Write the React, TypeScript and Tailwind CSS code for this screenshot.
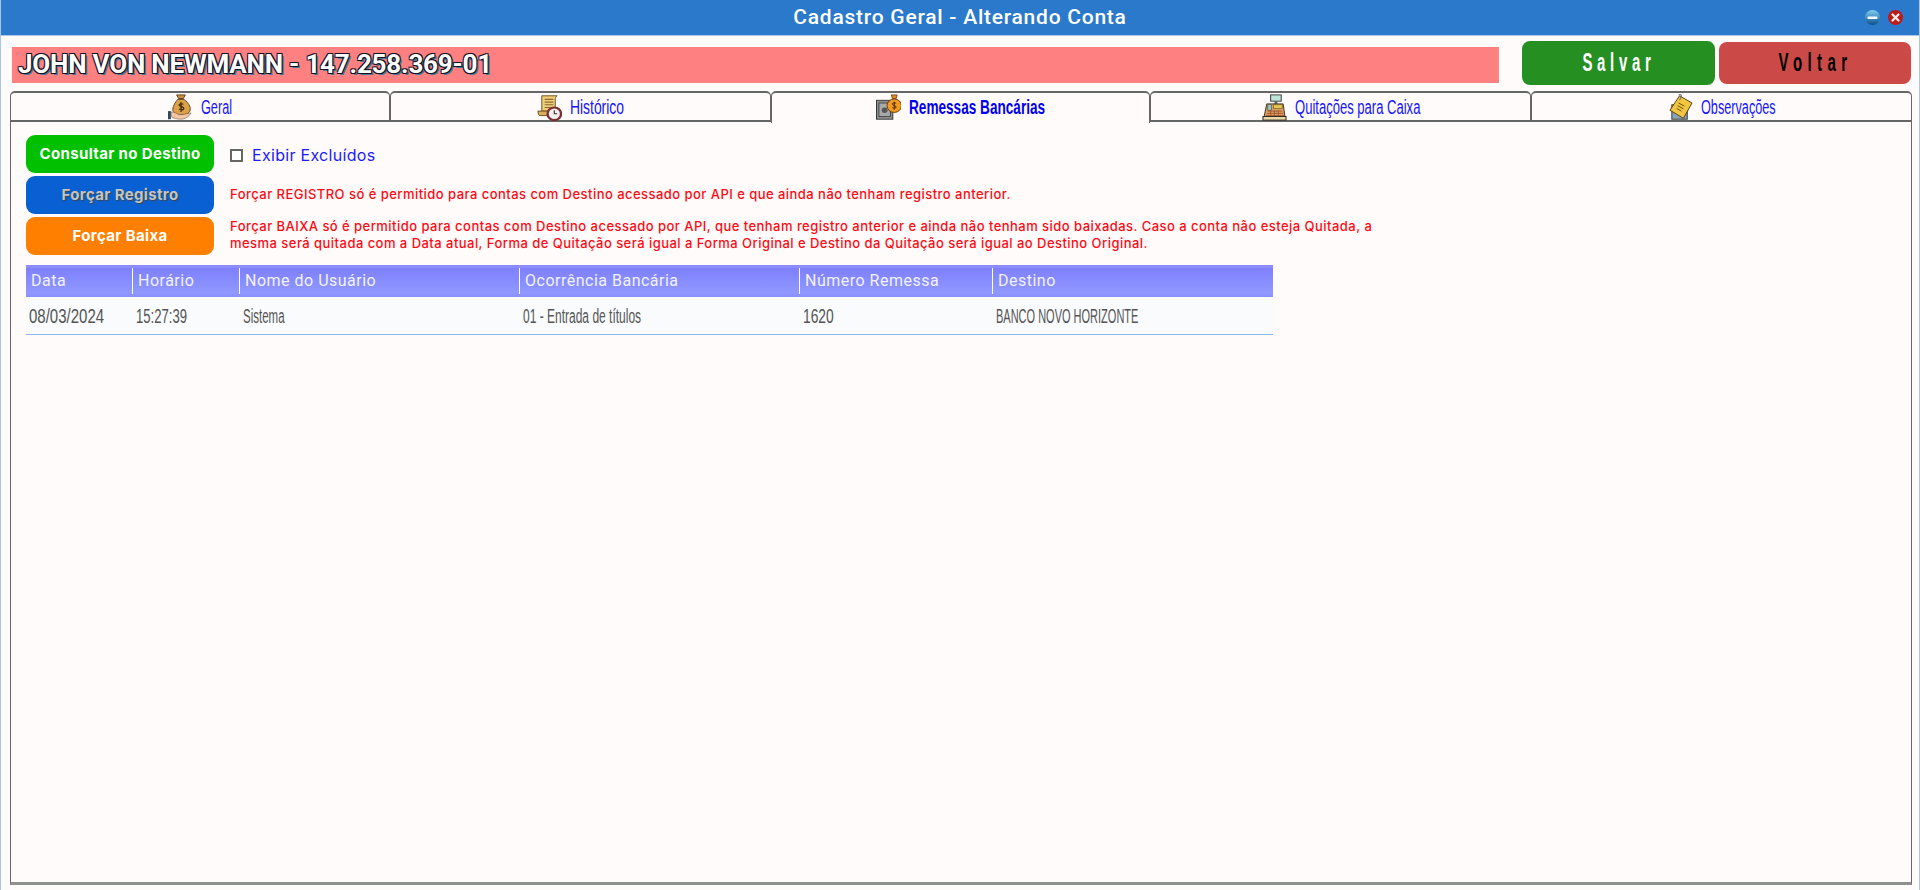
import type { ReactNode } from "react";

const CONDENSED = "font-['Liberation_Sans',sans-serif]";
const TECH = "font-['Roboto',sans-serif]";
const WIDE = "font-['Inter',sans-serif]";

function BagHandIcon() {
  return (
    <svg width="25" height="27" viewBox="0 0 26 30" preserveAspectRatio="none">
      <path d="M9 1h9l-2 4h-5z" fill="#c98f3c" stroke="#5a3d1c" strokeWidth="1" />
      <path d="M10 6h7c4 4 7 8 6 12-1 4-4 5-9 5-6 0-9-2-9-6 0-4 3-8 5-11z" fill="#dca24a" stroke="#5a3d1c" strokeWidth="1" />
      <path d="M13.500 9v11M16 11.500c-1-1-4-1-4.500.5-.5 2 5 1.500 5 4 0 2-3.500 2-5 .5" fill="none" stroke="#3a2812" strokeWidth="1.300" />
      <path d="M3 20c4 0 6 2 9 3 4 0 7-1 12-2-2 4-6 7-11 7-3 0-6-1-9-2z" fill="#f3c6a5" stroke="#7a5a4a" strokeWidth=".6" />
      <rect x="0" y="19" width="3" height="9" fill="#2f4a5e" />
    </svg>
  );
}

function ScrollClockIcon() {
  return (
    <svg width="25" height="27" viewBox="0 0 26 30" preserveAspectRatio="none">
      <path d="M5 2h16c-1 1-2 2-2 3v14H5z" fill="#f0cf7a" stroke="#6b4a1c" strokeWidth="1" />
      <path d="M1 19h15v3c0 1 1 2 1 2H3c-1 0-2-2-2-5z" fill="#d9ae5a" stroke="#6b4a1c" strokeWidth="1" />
      <path d="M8 6h9M8 9h9M8 12h9M8 15h6" stroke="#8a6a2c" strokeWidth="1.200" />
      <circle cx="18" cy="22" r="7" fill="#f4f0ee" stroke="#7c2f33" strokeWidth="2.400" />
      <path d="M18 18v4h3" fill="none" stroke="#333" strokeWidth="1.200" />
    </svg>
  );
}

function SafeBagIcon() {
  return (
    <svg width="25" height="27" viewBox="0 0 26 30" preserveAspectRatio="none">
      <rect x="0.500" y="7" width="17" height="21" fill="#8f8f8f" stroke="#333" strokeWidth="1" />
      <rect x="3" y="10" width="12" height="15" fill="#a8a8a8" stroke="#444" strokeWidth="1" />
      <circle cx="9" cy="18" r="3" fill="#555" />
      <path d="M16 1h6l-1 4h-4z" fill="#e58a1f" stroke="#5a3208" strokeWidth=".8" />
      <circle cx="19" cy="13" r="7.500" fill="#f39a1e" stroke="#6a3a08" strokeWidth="1" />
      <path d="M21 10.500c-1-1-4-1-4 .5 0 2 4 1.500 4 3.500 0 1.500-3 1.500-4 .5M19 8.500v9" fill="none" stroke="#4a2604" strokeWidth="1" />
    </svg>
  );
}

function RegisterIcon() {
  return (
    <svg width="25" height="27" viewBox="0 0 26 30" preserveAspectRatio="none">
      <rect x="9" y="1" width="11" height="7" fill="#bfe3d6" stroke="#333" strokeWidth="1" />
      <rect x="13" y="8" width="3" height="3" fill="#666" />
      <path d="M5 11h17l2 15H2z" fill="#d9a066" stroke="#3a2a18" strokeWidth="1" />
      <rect x="12" y="12" width="9" height="4" fill="#e7c84f" stroke="#5a4a18" strokeWidth=".6" />
      <rect x="6" y="12" width="4" height="6" fill="#9fc7b8" stroke="#444" strokeWidth=".6" />
      <path d="M6 19h15M5 21.500h17M4 24h19M9 18v7M13 18v7M17 18v7" stroke="#a4552c" strokeWidth="1" />
      <rect x="1" y="25" width="24" height="4" fill="#ead9a6" stroke="#222" strokeWidth="1" />
    </svg>
  );
}

function NoteIcon() {
  return (
    <svg width="25" height="27" viewBox="0 0 26 30" preserveAspectRatio="none">
      <rect x="4" y="12" width="16" height="16" fill="#8aa5b5" stroke="#333" strokeWidth="1" />
      <path d="M12 2l13 8-9 17-14-9z" fill="#f4c63f" stroke="#4a3a10" strokeWidth="1" />
      <path d="M11 10l6 3.500M10 13l6 3.500M9 16l5 3" stroke="#5a4a18" strokeWidth="1" />
      <path d="M11 1c2-1 3 0 3 2l-2 4" fill="none" stroke="#777" strokeWidth="1.200" />
    </svg>
  );
}

function MinimizeIcon() {
  return (
    <svg width="15" height="15" viewBox="0 0 15 15">
      <defs>
        <linearGradient id="minGrad" x1="0" y1="0" x2="0" y2="1">
          <stop offset="0" stopColor="#7fd0f0" />
          <stop offset="1" stopColor="#0a4f8c" />
        </linearGradient>
      </defs>
      <circle cx="7.500" cy="7.500" r="7.500" fill="url(#minGrad)" />
      <rect x="2.500" y="6.500" width="10" height="2.500" rx="1" fill="#f4fbff" />
    </svg>
  );
}

function CloseIcon() {
  return (
    <svg width="15" height="15" viewBox="0 0 15 15">
      <circle cx="7.500" cy="7.500" r="7.500" fill="#bd1a1a" />
      <path d="M4.500 4.500l6 6M10.500 4.500l-6 6" stroke="#fbeee6" strokeWidth="2.300" strokeLinecap="round" />
    </svg>
  );
}

type TabProps = {
  icon: ReactNode;
  label: string;
  tabWidth: string;
  labelWidth: string;
  labelScale: string;
  active?: boolean;
};

function Tab({ icon, label, tabWidth, labelWidth, labelScale, active }: TabProps) {
  return (
    <div
      className={`${tabWidth} ${active ? "h-[32px] border-b-0" : "h-[31px] border-b-2"} flex items-start justify-center gap-[8px] rounded-t-[5px] border-x border-t-2 border-[#666666] bg-[#fffbfa]`}
    >
      <span className="flex h-[28px] w-[25px] items-center">{icon}</span>
      <span className={`${labelWidth} ${CONDENSED} h-[28px] whitespace-nowrap text-[20px] leading-[29px]`}>
        <span className={`${labelScale} inline-block origin-left ${active ? "font-bold text-[#0000ee]" : "text-[#1414ff]"}`}>{label}</span>
      </span>
    </div>
  );
}

function ActionButton({ label, color, muted }: { label: string; color: string; muted?: boolean }) {
  return (
    <button
      className={`${WIDE} h-[38px] w-[188px] rounded-[9px] text-[15px] font-bold tracking-[0.35px] ${color} ${
        muted ? "text-[#c4c4c4] [text-shadow:1px_1px_1px_#444]" : "text-white"
      }`}
    >
      {label}
    </button>
  );
}

const columns = [
  { title: "Data", value: "08/03/2024", width: "w-[107px]", scale: "scale-x-[0.75]" },
  { title: "Horário", value: "15:27:39", width: "w-[107px]", scale: "scale-x-[0.655]" },
  { title: "Nome do Usuário", value: "Sistema", width: "w-[280px]", scale: "scale-x-[0.575]" },
  { title: "Ocorrência Bancária", value: "01 - Entrada de títulos", width: "w-[280px]", scale: "scale-x-[0.6]" },
  { title: "Número Remessa", value: "1620", width: "w-[193px]", scale: "scale-x-[0.69]" },
  { title: "Destino", value: "BANCO NOVO HORIZONTE", width: "w-[280px]", scale: "scale-x-[0.55]" },
];

export default function App() {
  return (
    <div className="flex h-[890px] w-[1920px] flex-col overflow-hidden border-x border-[#a9c5ea] bg-[#fffbfa]">
      <div className={`${TECH} relative -mx-px h-[36px] border-b border-[#a9c5ea] bg-[#2a79cb] text-center text-[21px] font-medium leading-[34px] tracking-[0.75px] text-white`}>
        Cadastro Geral - Alterando Conta
        <div className="absolute right-[17px] top-[10px] flex gap-[8px]">
          <MinimizeIcon />
          <CloseIcon />
        </div>
      </div>

      <div className="flex h-[49px] items-start pl-[11px] pt-[5px]">
        <div
          className={`${TECH} mt-[6px] h-[36px] w-[1487px] bg-[#ff8080] pl-[6px] text-[26px] font-bold leading-[35px] tracking-[-0.2px] text-white [text-shadow:-1px_-1px_0_#112,1px_-1px_0_#112,-1px_1px_0_#112,1px_1px_0_#112,2px_2px_0_#4a7a94]`}
        >
          JOHN VON NEWMANN - 147.258.369-01
        </div>
        <button className={`${CONDENSED} ml-[23px] flex h-[44px] w-[193px] items-center justify-center rounded-[8px] bg-[#268f22] text-[25px] font-bold tracking-[7.8px] text-white`}>
          <span className="inline-block scale-x-[0.6]">Salvar</span>
        </button>
        <button className={`${CONDENSED} ml-[4px] mt-[1px] flex h-[42px] w-[192px] items-center justify-center rounded-[8px] bg-[#cb4a48] text-[25px] font-bold tracking-[9px] text-black`}>
          <span className="inline-block scale-x-[0.6]">Voltar</span>
        </button>
      </div>

      <div className="ml-[9px] mt-[6px] flex h-[32px] items-start">
        <Tab tabWidth="w-[380px]" icon={<BagHandIcon />} label="Geral" labelWidth="w-[31px]" labelScale="scale-x-[0.634]" />
        <Tab tabWidth="w-[381px]" icon={<ScrollClockIcon />} label="Histórico" labelWidth="w-[54px]" labelScale="scale-x-[0.694]" />
        <Tab tabWidth="w-[379px]" icon={<SafeBagIcon />} label="Remessas Bancárias" labelWidth="w-[136px]" labelScale="scale-x-[0.68]" active />
        <Tab tabWidth="w-[381px]" icon={<RegisterIcon />} label="Quitações para Caixa" labelWidth="w-[125px]" labelScale="scale-x-[0.652]" />
        <Tab tabWidth="w-[381px]" icon={<NoteIcon />} label="Observações" labelWidth="w-[74px]" labelScale="scale-x-[0.634]" />
      </div>

      <div className="-mt-px ml-[9px] h-[763px] w-[1902px] border-x border-b-[3px] border-[#666666] border-b-[#909090] pl-[15px] pt-[13px]">
        <div className="flex gap-[16px]">
          <div className="flex w-[188px] flex-col gap-[3px]">
            <ActionButton label="Consultar no Destino" color="bg-[#00c000]" />
            <ActionButton label="Forçar Registro" color="bg-[#0860d2]" muted />
            <ActionButton label="Forçar Baixa" color="bg-[#ff8000]" />
          </div>
          <div className={`${WIDE} w-[1200px] text-[13px] font-medium leading-[17px] tracking-[0.46px] text-[#ff0a14]`}>
            <label className="flex h-[38px] items-center gap-[9px] pt-[2px] text-[16px] font-normal tracking-[0.3px] text-[#1a1aff]">
              <span className="h-[13px] w-[13px] border-2 border-[#666666] bg-white" />
              Exibir Excluídos
            </label>
            <p className="mt-[13px]">
              Forçar REGISTRO só é permitido para contas com Destino acessado por API e que ainda não tenham registro anterior.
            </p>
            <p className="mt-[15px]">
              Forçar BAIXA só é permitido para contas com Destino acessado por API, que tenham registro anterior e ainda não tenham sido baixadas. Caso a conta não esteja Quitada, a
              <br />
              mesma será quitada com a Data atual, Forma de Quitação será igual a Forma Original e Destino da Quitação será igual ao Destino Original.
            </p>
          </div>
        </div>

        <div className="mt-[10px] w-[1247px]">
          <div className="flex h-[32px] items-center border-y-[3px] border-t-[#8c8cff] border-b-[#8c92ff] bg-gradient-to-b from-[#7f7fff] to-[#9099ff]">
            {columns.map((c, i) => (
              <div
                key={c.title}
                className={`${c.width} ${TECH} h-[26px] pl-[5px] text-[16px] leading-[26px] tracking-[0.5px] text-[#f2f2ff] ${i < 5 ? "border-r border-white" : ""}`}
              >
                {c.title}
              </div>
            ))}
          </div>
          <div className="flex h-[38px] items-center border-b border-[#90b8f0] bg-[#f9fbfc]">
            {columns.map((c) => (
              <div key={c.title} className={`${c.width} ${CONDENSED} whitespace-nowrap pl-[3px] text-[20px] text-[#555555]`}>
                <span className={`${c.scale} inline-block origin-left`}>{c.value}</span>
              </div>
            ))}
          </div>
        </div>
      </div>
    </div>
  );
}
